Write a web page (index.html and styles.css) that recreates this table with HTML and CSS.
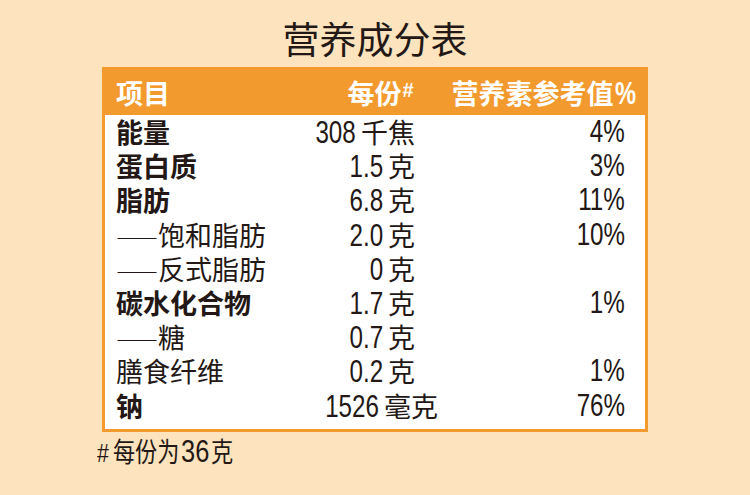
FILE: index.html
```html
<!DOCTYPE html>
<html lang="zh-CN">
<head>
<meta charset="utf-8">
<title>营养成分表</title>
<link rel="stylesheet" href="styles.css">
</head>
<body>
<div class="page">
  <h1 class="title">营养成分表</h1>
  <div class="panel">
    <div class="head">
      <span class="h-item">项目</span>
      <span class="h-serv">每份<span class="sup">#</span></span>
      <span class="h-nrv">营养素参考值<span class="h-pct">%</span></span>
    </div>
    <div class="rows">
      <div class="row main"><span class="name">能量</span><span class="amt"><span class="num">308</span><span class="unit">千焦</span></span><span class="pct"><span class="num">4%</span></span></div>
      <div class="row main"><span class="name">蛋白质</span><span class="amt"><span class="num">1.5</span><span class="unit">克</span></span><span class="pct"><span class="num">3%</span></span></div>
      <div class="row main"><span class="name">脂肪</span><span class="amt"><span class="num">6.8</span><span class="unit">克</span></span><span class="pct"><span class="num">11%</span></span></div>
      <div class="row sub"><span class="name"><span class="dash">——</span>饱和脂肪</span><span class="amt"><span class="num">2.0</span><span class="unit">克</span></span><span class="pct"><span class="num">10%</span></span></div>
      <div class="row sub"><span class="name"><span class="dash">——</span>反式脂肪</span><span class="amt"><span class="num">0</span><span class="unit">克</span></span><span class="pct"></span></div>
      <div class="row main"><span class="name">碳水化合物</span><span class="amt"><span class="num">1.7</span><span class="unit">克</span></span><span class="pct"><span class="num">1%</span></span></div>
      <div class="row sub"><span class="name"><span class="dash">——</span>糖</span><span class="amt"><span class="num">0.7</span><span class="unit">克</span></span><span class="pct"></span></div>
      <div class="row sub"><span class="name">膳食纤维</span><span class="amt"><span class="num">0.2</span><span class="unit">克</span></span><span class="pct"><span class="num">1%</span></span></div>
      <div class="row main"><span class="name">钠</span><span class="amt amt-wide"><span class="num">1526</span><span class="unit">毫克</span></span><span class="pct"><span class="num">76%</span></span></div>
    </div>
  </div>
  <p class="note"><span class="note-text"><span class="hash">#</span>每份为<span class="note-num">36</span>克</span></p>
</div>
</body>
</html>
```

FILE: styles.css
```css
* {
  box-sizing: border-box;
  margin: 0;
  padding: 0;
}

body {
  width: 750px;
  height: 495px;
  overflow: hidden;
  background: #fde3be;
  color: #231815;
  font-family: "Noto Sans CJK SC", sans-serif;
}

.page {
  padding-top: 13px;
}

.title {
  font-size: 37px;
  font-weight: 400;
  line-height: 50px;
  text-align: center;
  color: #231815;
}

.panel {
  margin: 4px 102px 0;
  border: 3px solid #f39a2e;
  background: #fff;
}

.head {
  height: 45px;
  background: #f39a2e;
  color: #fff;
  font-weight: 700;
  font-size: 27px;
  line-height: 45px;
  display: flex;
  align-items: flex-start;
  padding: 0 9px 0 11px;
}

.h-item {
  flex: 1;
}

.h-serv {
  display: inline-flex;
  align-items: flex-start;
}

.sup {
  font-family: "Liberation Sans", sans-serif;
  font-size: 20px;
  font-weight: 700;
  line-height: 20px;
  margin-top: 10px;
  margin-left: 1px;
}

.h-nrv {
  margin-left: 38px;
  white-space: nowrap;
}

.h-pct {
  display: inline-block;
  font-family: "Liberation Sans", sans-serif;
  font-size: 32px;
  font-weight: 700;
  transform: scaleX(0.74);
  transform-origin: left center;
  margin-left: 1px;
  margin-right: -7px;
}

.rows {
  padding: 0 20px 6px 11px;
}

.row {
  display: grid;
  grid-template-columns: 184px 115px 210px;
  font-size: 27px;
  line-height: 34.2px;
  height: 34.2px;
}

.name {
  white-space: nowrap;
}

.main .name {
  font-weight: 700;
}

.sub .name {
  font-weight: 400;
}

.dash {
  font-size: 21px;
  font-weight: 400;
}

.amt {
  display: flex;
  justify-content: flex-end;
  align-items: baseline;
  white-space: nowrap;
}

.amt-wide {
  margin-right: -23px;
}

.pct {
  display: flex;
  justify-content: flex-end;
  align-items: baseline;
}

.num {
  display: inline-block;
  font-family: "Liberation Sans", sans-serif;
  font-size: 31px;
  transform: scaleX(0.78);
  transform-origin: right center;
}

.unit {
  margin-left: 5px;
}

.note {
  margin-top: 2px;
  padding-left: 97px;
  font-size: 27px;
  line-height: 34px;
}

.note-text {
  display: inline-block;
  transform: scaleX(0.82);
  transform-origin: left center;
  white-space: nowrap;
}

.hash {
  font-family: "Liberation Sans", sans-serif;
  font-size: 26px;
  margin-right: 5px;
}

.note-num {
  font-family: "Liberation Sans", sans-serif;
  font-size: 31px;
  margin: 0 2px;
}
```
